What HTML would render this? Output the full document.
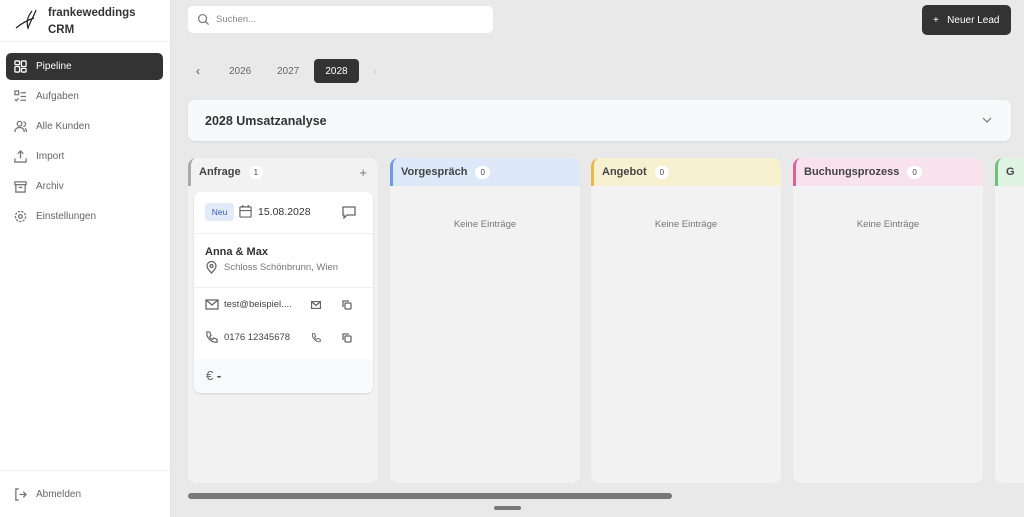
<!DOCTYPE html>
<html><head><meta charset="utf-8"><style>
*{box-sizing:border-box;margin:0;padding:0}
body{width:1024px;height:517px;overflow:hidden;background:#e9e9e9;font-family:"Liberation Sans",sans-serif;color:#333;position:relative}
.sb{position:absolute;left:0;top:0;width:171px;height:517px;background:#fff;border-right:1px solid #e3e3e3}
.logo{position:absolute;left:48px;top:5px;font-size:11.5px;font-weight:bold;line-height:17px;color:#333}
.nav{position:absolute;left:6px;width:157px;height:27px;border-radius:5px;font-size:10px;color:#666;display:flex;align-items:center;padding-left:8px}
.nav svg{width:13px;height:13px;margin-right:9px;stroke:#777;fill:none;stroke-width:1.4}
.nav.a{background:#333;color:#fff}.nav.a svg{stroke:#fff}
.abs{position:absolute}
.col{position:absolute;top:158px;width:190px;height:325px;background:#f2f2f2;border-radius:8px;overflow:hidden}
.hd{height:28px;display:flex;align-items:center;padding-left:8px;font-size:11px;font-weight:bold;color:#444;border-left:3px solid;border-radius:8px 0 0 0}
.bd{display:inline-block;background:#fff;border-radius:8px;font-size:8px;font-weight:normal;padding:2px 5px;margin-left:8px}
.empty{text-align:center;font-size:9.5px;color:#777;margin-top:33px}
.card{position:absolute;left:6px;top:34px;width:179px;height:201px;background:#fff;border-radius:7px;box-shadow:0 1px 2px rgba(0,0,0,.12)}
.ic{stroke:#666;fill:none;stroke-width:1.3}
</style></head><body>
<div class="sb">
<svg class="abs" style="left:14px;top:8px" width="28" height="24" viewBox="0 0 28 24"><path d="M2 20 C8 15 14 12 20 10 M18 3 C14 8 12 14 14 20 C16 14 20 8 22 2" stroke="#222" fill="none" stroke-width="1.2"/></svg>
<div class="logo">frankeweddings<br>CRM</div>
<div style="position:absolute;left:0;top:41px;width:171px;border-top:1px solid #eee"></div>
<div class="nav a" style="top:53px"><svg viewBox="0 0 14 14"><rect x="1" y="1" width="5" height="4" rx="1"/><rect x="8" y="1" width="5" height="6" rx="1"/><rect x="1" y="7" width="5" height="6" rx="1"/><rect x="8" y="9" width="5" height="4" rx="1"/></svg>Pipeline</div>
<div class="nav" style="top:83px"><svg viewBox="0 0 14 14"><rect x="1" y="1" width="4" height="4"/><path d="M7 3h6M7 7h6M7 11h6M1 10l1.5 1.5L5 9"/></svg>Aufgaben</div>
<div class="nav" style="top:113px"><svg viewBox="0 0 14 14"><circle cx="6" cy="4" r="2.5"/><path d="M1 13c0-3 2-5 5-5s5 2 5 5M10 2a2.5 2.5 0 010 5M12 9c1 1 1.5 2.5 1.5 4"/></svg>Alle Kunden</div>
<div class="nav" style="top:143px"><svg viewBox="0 0 14 14"><path d="M7 9V1M4 4l3-3 3 3M1 9v4h12V9"/></svg>Import</div>
<div class="nav" style="top:173px"><svg viewBox="0 0 14 14"><rect x="1" y="2" width="12" height="3"/><path d="M2 5v8h10V5M5 8h4"/></svg>Archiv</div>
<div class="nav" style="top:203px"><svg viewBox="0 0 14 14"><circle cx="7" cy="7" r="2"/><circle cx="7" cy="7" r="5.5" stroke-dasharray="2.5 1.3"/></svg>Einstellungen</div>
<div style="position:absolute;left:0;top:470px;width:171px;border-top:1px solid #eee"></div>
<div class="nav" style="top:481px"><svg viewBox="0 0 14 14"><path d="M5 1H2v12h3M6 7h7M10 4l3 3-3 3"/></svg>Abmelden</div>
</div>

<div class="abs" style="left:188px;top:6px;width:305px;height:27px;background:#fff;border-radius:5px;font-size:9.5px;color:#888;padding:8px 0 0 28px">Suchen...
<svg class="abs" style="left:9px;top:7px" width="13" height="13" viewBox="0 0 14 14"><circle cx="6" cy="6" r="4.3" stroke="#777" fill="none" stroke-width="1.3"/><path d="M9.3 9.3L12.5 12.5" stroke="#777" stroke-width="1.3"/></svg></div>
<div class="abs" style="left:922px;top:5px;width:89px;height:30px;background:#333;border-radius:5px;color:#fff;font-size:10px;padding:10px 0 0 11px">+&nbsp;&nbsp;&nbsp;Neuer Lead</div>

<div class="abs" style="left:196px;top:64px;font-size:12px;color:#555">‹</div>
<div class="abs" style="left:229px;top:66px;font-size:10px;color:#666">2026</div>
<div class="abs" style="left:277px;top:66px;font-size:10px;color:#666">2027</div>
<div class="abs" style="left:314px;top:59px;width:45px;height:24px;background:#333;border-radius:4px;color:#fff;font-size:10px;text-align:center;padding-top:7px">2028</div>
<div class="abs" style="left:373px;top:64px;font-size:12px;color:#ccc">›</div>

<div class="abs" style="left:188px;top:100px;width:823px;height:41px;background:#f8f9fa;border-radius:7px;box-shadow:0 1px 2px rgba(0,0,0,.08);font-size:12.5px;font-weight:bold;color:#333;padding:14px 0 0 17px">2028 Umsatzanalyse
<svg class="abs" style="left:794px;top:17px" width="10" height="7" viewBox="0 0 10 7"><path d="M1 1l4 4 4-4" stroke="#777" fill="none" stroke-width="1.2"/></svg></div>

<div class="col" style="left:188px"><div class="hd" style="border-color:#aaa">Anfrage<span class="bd">1</span><span style="margin-left:auto;margin-right:11px;font-weight:normal;color:#777;font-size:13px">+</span></div>
<div class="card">
<div class="abs" style="left:11px;top:11px;width:29px;height:18px;background:#e3ebfa;color:#3b5bb5;font-size:8.5px;border-radius:3px;text-align:center;padding-top:4px">Neu</div>
<svg class="abs ic" style="left:45px;top:13px" width="13" height="13" viewBox="0 0 14 14"><rect x="1" y="2" width="12" height="11" rx="1"/><path d="M1 6h12M4 0v3M10 0v3"/></svg>
<div class="abs" style="left:64px;top:14px;font-size:10.5px;color:#333">15.08.2028</div>
<svg class="abs ic" style="left:148px;top:13px" width="14" height="14" viewBox="0 0 14 14"><path d="M1 2h12v8H5l-3 3v-3H1z"/></svg>
<div class="abs" style="left:0;top:41px;width:179px;border-top:1px solid #f0f0f0"></div>
<div class="abs" style="left:11px;top:54px;font-size:11px;font-weight:bold;color:#333">Anna &amp; Max</div>
<svg class="abs ic" style="left:12px;top:69px" width="11" height="13" viewBox="0 0 11 13"><path d="M5.5 12S1 7.5 1 5a4.5 4.5 0 019 0c0 2.5-4.5 7-4.5 7z"/><circle cx="5.5" cy="5" r="1.5"/></svg>
<div class="abs" style="left:30px;top:70px;font-size:9.5px;color:#777">Schloss Schönbrunn, Wien</div>
<div class="abs" style="left:0;top:95px;width:179px;border-top:1px solid #f0f0f0"></div>
<svg class="abs ic" style="left:11px;top:107px" width="14" height="11" viewBox="0 0 14 11"><rect x="1" y="1" width="12" height="9"/><path d="M1 1l6 5 6-5"/></svg>
<div class="abs" style="left:30px;top:107px;font-size:9.5px;color:#444">test@beispiel....</div>
<svg class="abs ic" style="left:117px;top:109px" width="10" height="8" viewBox="0 0 10 8"><rect x=".5" y=".5" width="9" height="7"/><path d="M.5 .5l4.5 4 4.5-4"/></svg>
<svg class="abs ic" style="left:148px;top:108px" width="10" height="10" viewBox="0 0 10 10"><rect x="3" y="3" width="6" height="6" rx="1"/><path d="M1 7V1h6"/></svg>
<svg class="abs ic" style="left:11px;top:139px" width="13" height="13" viewBox="0 0 14 14"><path d="M2 1h3l1.5 3.5L5 6c1 2 2 3 3 3l1.5-1.5L13 9v3c-6 1-12-5-11-11z"/></svg>
<div class="abs" style="left:30px;top:140px;font-size:9.5px;color:#444">0176 12345678</div>
<svg class="abs ic" style="left:117px;top:141px" width="10" height="10" viewBox="0 0 14 14"><path d="M2 1h3l1.5 3.5L5 6c1 2 2 3 3 3l1.5-1.5L13 9v3c-6 1-12-5-11-11z"/></svg>
<svg class="abs ic" style="left:148px;top:141px" width="10" height="10" viewBox="0 0 10 10"><rect x="3" y="3" width="6" height="6" rx="1"/><path d="M1 7V1h6"/></svg>
<div class="abs" style="left:0;top:167px;width:179px;height:34px;background:#f9fafb;border-radius:0 0 7px 7px"></div>
<div class="abs" style="left:12px;top:176px;font-size:13px;color:#666">€ <b style="color:#444">-</b></div>
</div></div>
<div class="col" style="left:390px"><div class="hd" style="border-color:#6b9ce8;background:#dde8f8">Vorgespräch<span class="bd">0</span></div><div class="empty">Keine Einträge</div></div>
<div class="col" style="left:591px"><div class="hd" style="border-color:#e8b84a;background:#f8f1d0">Angebot<span class="bd">0</span></div><div class="empty">Keine Einträge</div></div>
<div class="col" style="left:793px"><div class="hd" style="border-color:#e0609a;background:#f8e2ee">Buchungsprozess<span class="bd">0</span></div><div class="empty">Keine Einträge</div></div>
<div class="col" style="left:995px;width:29px;border-radius:8px 0 0 8px"><div class="hd" style="border-color:#6cc27a;background:#e1f3e3">G</div></div>

<div class="abs" style="left:188px;top:493px;width:484px;height:6px;background:#777;border-radius:3px"></div>
<div class="abs" style="left:494px;top:506px;width:27px;height:4px;background:#777;border-radius:2px"></div>
</body></html>
